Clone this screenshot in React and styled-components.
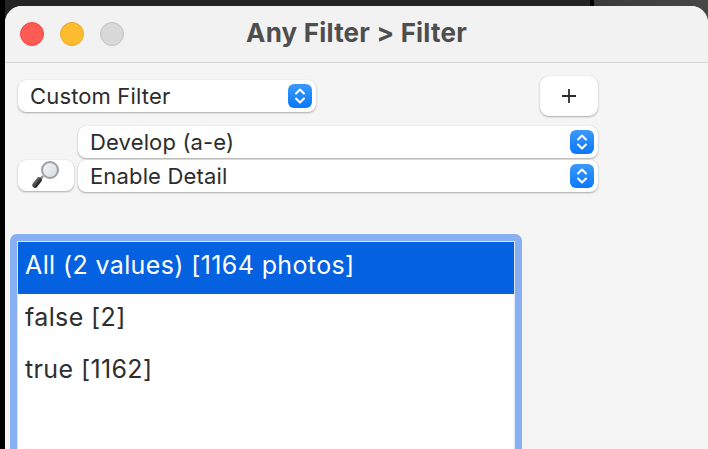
import React from 'react'
import styled, { createGlobalStyle } from 'styled-components'

const Global = createGlobalStyle`
    html,body{
        margin:0;
        padding:0;
        width:708px;
        height:449px;
        overflow:hidden;
        background:#000;
    }
`

function Stepper() {
    return (
        <StepperBox>
            <svg width="14" height="18" viewBox="0 0 14 18" fill="none" stroke="#fff" strokeWidth="2" strokeLinecap="round" strokeLinejoin="round">
                <path d="M3 6.5 L7 2.5 L11 6.5" />
                <path d="M3 11.5 L7 15.5 L11 11.5" />
            </svg>
        </StepperBox>
    )
}

function Popup({label,wide}) {
    return (
        <PopupBox wide={wide}>
            <PopupLabel>{label}</PopupLabel>
            <Stepper/>
        </PopupBox>
    )
}

function Magnifier() {
    return (
        <svg width="32" height="30" viewBox="0 0 32 30">
            <defs>
                <linearGradient id="lens" x1="0" y1="0" x2="1" y2="1">
                    <stop offset="0" stopColor="#f4f6f8" />
                    <stop offset="1" stopColor="#d5dbe0" />
                </linearGradient>
                <linearGradient id="handle" x1="0" y1="0" x2="1" y2="1">
                    <stop offset="0" stopColor="#777" />
                    <stop offset="1" stopColor="#111" />
                </linearGradient>
            </defs>
            <line x1="13" y1="15" x2="10" y2="18.5" stroke="#8a8f93" strokeWidth="2.5" />
            <line x1="9" y1="19" x2="5" y2="24" stroke="url(#handle)" strokeWidth="5.5" strokeLinecap="round" />
            <circle cx="20" cy="9" r="8" fill="url(#lens)" stroke="#9a9fa3" strokeWidth="2" />
        </svg>
    )
}

export default function App() {
    return (
        <Desk>
            <Global/>
            <Window>
                <TitleBar>
                    <Lights>
                        <Light color="#ff5b55" edge="#ea4a44" />
                        <Light color="#febc2e" edge="#e6a928" />
                        <Light color="#d8d8d8" edge="#c2c2c2" />
                    </Lights>
                    <Title>Any Filter &gt; Filter</Title>
                </TitleBar>
                <Content>
                    <TopRow>
                        <Popup label="Custom Filter" />
                        <PlusButton>
                            <svg width="14" height="14" viewBox="0 0 14 14" stroke="#2b2b2b" strokeWidth="1.8">
                                <path d="M7 0 V14 M0 7 H14" />
                            </svg>
                        </PlusButton>
                    </TopRow>
                    <CriteriaRow>
                        <SearchButton><Magnifier/></SearchButton>
                        <Selects>
                            <Popup wide label="Develop (a-e)" />
                            <Popup wide label="Enable Detail" />
                        </Selects>
                    </CriteriaRow>
                    <ListRing>
                        <List>
                            <Row selected>All (2 values) [1164 photos]</Row>
                            <Row>false [2]</Row>
                            <Row>true [1162]</Row>
                        </List>
                    </ListRing>
                </Content>
            </Window>
        </Desk>
    )
}

const Desk = styled.div`
    width:708px;
    height:449px;
    box-sizing:border-box;
    padding:6px 0 0 5px;
    overflow:hidden;
    background:linear-gradient(to right,#000 0,#000 5px,#242424 5px,#242424 590px,#000 590px,#000 594px,#3a3a3a 594px,#474747 100%);
`
const Window = styled.div`
    width:703px;
    height:443px;
    background:#f5f5f5;
    border-radius:17px 17px 0 0;
    overflow:hidden;
    font-family:Inter,"Liberation Sans",sans-serif;
`
const TitleBar = styled.div`
    position:relative;
    height:57px;
    box-sizing:border-box;
    display:flex;
    align-items:center;
    justify-content:center;
    background:#f2f2f2;
    border-bottom:1px solid #d4d4d4;
`
const Lights = styled.div`
    position:absolute;
    left:15px;
    top:16px;
    display:flex;
    gap:16px;
`
const Light = styled.span`
    width:24px;
    height:24px;
    box-sizing:border-box;
    border-radius:50%;
    background:${props => props.color};
    border:1px solid ${props => props.edge};
`
const Title = styled.div`
    font-size:26px;
    font-weight:700;
    letter-spacing:.2px;
    color:#4e4e4e;
    margin-top:-3px;
`
const Content = styled.div`
    padding:13px 0 0 5px;
`
const TopRow = styled.div`
    width:580px;
    height:40px;
    margin-left:8px;
    display:flex;
    align-items:center;
    justify-content:space-between;
`
const PopupBox = styled.div`
    width:${props => props.wide ? '520px' : '298px'};
    height:32px;
    box-sizing:border-box;
    display:flex;
    align-items:center;
    justify-content:space-between;
    padding:0 4px 0 12px;
    background:#fff;
    border-radius:8px;
    box-shadow:0 1px 2px rgba(0,0,0,.3),0 0 1px rgba(0,0,0,.15);
`
const PopupLabel = styled.span`
    font-size:22px;
    letter-spacing:.15px;
    color:#2c2c2c;
    white-space:nowrap;
`
const StepperBox = styled.span`
    width:24px;
    height:24px;
    border-radius:6px;
    display:flex;
    align-items:center;
    justify-content:center;
    background:linear-gradient(to bottom,#3b99fc,#0a78fa);
`
const PlusButton = styled.div`
    width:58px;
    height:40px;
    display:flex;
    align-items:center;
    justify-content:center;
    background:#fff;
    border-radius:9px;
    box-shadow:0 1px 2px rgba(0,0,0,.3),0 0 1px rgba(0,0,0,.15);
`
const CriteriaRow = styled.div`
    margin:10px 0 0 8px;
    display:flex;
    align-items:flex-end;
    gap:4px;
`
const SearchButton = styled.div`
    width:56px;
    height:31px;
    margin-bottom:1px;
    display:flex;
    align-items:center;
    justify-content:center;
    background:#fff;
    border-radius:8px;
    box-shadow:0 1px 2px rgba(0,0,0,.3),0 0 1px rgba(0,0,0,.15);
`
const Selects = styled.div`
    display:flex;
    flex-direction:column;
    gap:2px;
`
const ListRing = styled.div`
    margin-top:42px;
    width:512px;
    height:240px;
    box-sizing:border-box;
    padding:7px 7px 0;
    background:#88aff2;
    border-radius:7px 7px 0 0;
`
const List = styled.div`
    height:100%;
    box-sizing:border-box;
    background:#fff;
    border:1px solid #dbe6fa;
    border-bottom:none;
`
const Row = styled.div`
    height:52px;
    box-sizing:border-box;
    display:flex;
    align-items:center;
    padding:0 0 6px 7px;
    font-size:25px;
    letter-spacing:.38px;
    white-space:nowrap;
    background:${props => props.selected ? '#0461e0' : 'transparent'};
    color:${props => props.selected ? '#fff' : '#2e2e2e'};
`
